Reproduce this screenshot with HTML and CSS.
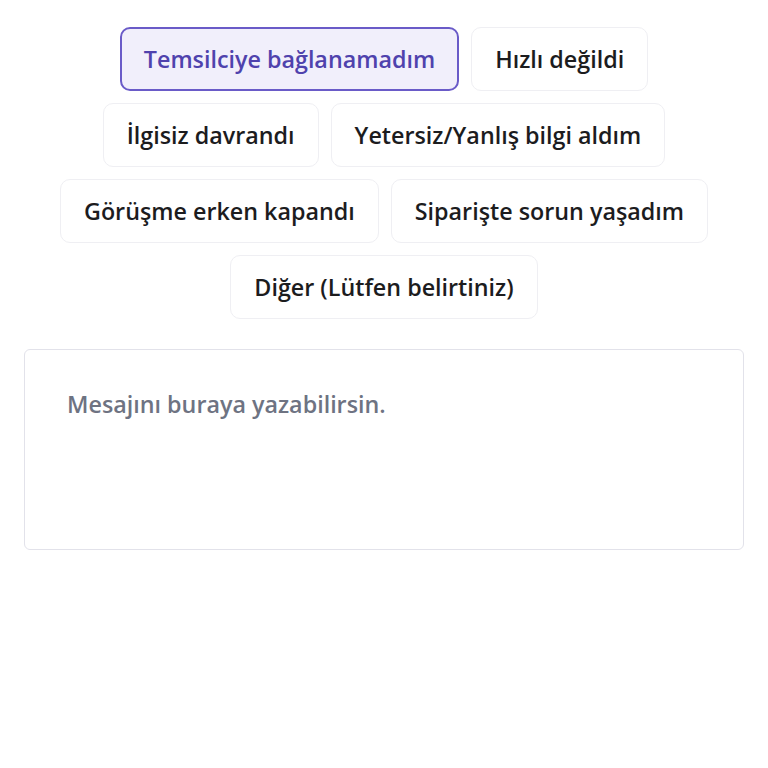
FILE: index.html
```html
<!DOCTYPE html>
<html lang="tr">
<head>
<meta charset="utf-8">
<link rel="stylesheet" href="styles.css">
</head>
<body>
<div class="wrap">
  <div class="chips">
    <button class="chip selected">Temsilciye bağlanamadım</button>
    <button class="chip">Hızlı değildi</button>
    <button class="chip">İlgisiz davrandı</button>
    <button class="chip">Yetersiz/Yanlış bilgi aldım</button>
    <button class="chip">Görüşme erken kapandı</button>
    <button class="chip">Siparişte sorun yaşadım</button>
    <button class="chip">Diğer (Lütfen belirtiniz)</button>
  </div>
  <textarea class="message" placeholder="Mesajını buraya yazabilirsin."></textarea>
</div>
</body>
</html>
```
FILE: styles.css
```css
html, body {
  margin: 0;
  padding: 0;
  background: #ffffff;
}
.wrap {
  padding: 27px 24px 0;
  font-family: "Open Sans", "Noto Sans", sans-serif;
}
.chips {
  display: flex;
  flex-wrap: wrap;
  justify-content: center;
  gap: 12px;
}
.chip {
  font-family: "Open Sans", "Noto Sans", sans-serif;
  font-size: 23.3px;
  font-weight: 600;
  line-height: 30px;
  color: #1c1c1e;
  background: #ffffff;
  border: 1px solid #efeff3;
  border-radius: 10px;
  padding: 16px 23px;
  cursor: pointer;
}
.chip.selected {
  background: #f1effb;
  border: 2px solid #6a5bc8;
  padding: 15px 22px;
  color: #4f42ad;
}
.message {
  display: block;
  box-sizing: border-box;
  width: 720px;
  height: 201px;
  margin-top: 30px;
  padding: 39px 42px;
  font-family: "Open Sans", "Noto Sans", sans-serif;
  font-size: 23.3px;
  font-weight: 600;
  line-height: 30px;
  color: #1c1c1e;
  border: 1.5px solid #e2e2ea;
  border-radius: 6px;
  resize: none;
  outline: none;
}
.message::placeholder {
  color: #6e7382;
}
```
